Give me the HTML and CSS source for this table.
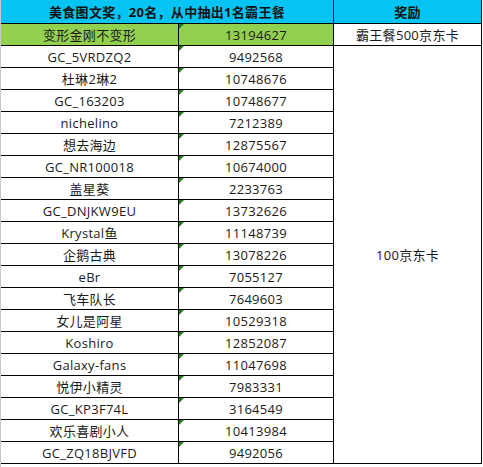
FILE: index.html
```html
<!DOCTYPE html>
<html lang="zh-CN">
<head>
<meta charset="utf-8">
<title>美食图文奖</title>
<link rel="stylesheet" href="styles.css">
</head>
<body>
<div class="sheet">
  <div class="grid">
    <div class="cell head span2">美食图文奖，20名，从中抽出1名霸王餐</div>
    <div class="cell head">奖励</div>

    <div class="cell win">变形金刚不变形</div>
    <div class="cell win num">13194627</div>
    <div class="cell">霸王餐500京东卡</div>

    <div class="cell">GC_5VRDZQ2</div>
    <div class="cell num">9492568</div>
    <div class="cell prize">100京东卡</div>

    <div class="cell">杜琳2琳2</div>
    <div class="cell num">10748676</div>
    <div class="cell">GC_163203</div>
    <div class="cell num">10748677</div>
    <div class="cell">nichelino</div>
    <div class="cell num">7212389</div>
    <div class="cell">想去海边</div>
    <div class="cell num">12875567</div>
    <div class="cell">GC_NR100018</div>
    <div class="cell num">10674000</div>
    <div class="cell">盖星葵</div>
    <div class="cell num">2233763</div>
    <div class="cell">GC_DNJKW9EU</div>
    <div class="cell num">13732626</div>
    <div class="cell">Krystal鱼</div>
    <div class="cell num">11148739</div>
    <div class="cell">企鹅古典</div>
    <div class="cell num">13078226</div>
    <div class="cell">eBr</div>
    <div class="cell num">7055127</div>
    <div class="cell">飞车队长</div>
    <div class="cell num">7649603</div>
    <div class="cell">女儿是阿星</div>
    <div class="cell num">10529318</div>
    <div class="cell">Koshiro</div>
    <div class="cell num">12852087</div>
    <div class="cell">Galaxy-fans</div>
    <div class="cell num">11047698</div>
    <div class="cell">悦伊小精灵</div>
    <div class="cell num">7983331</div>
    <div class="cell">GC_KP3F74L</div>
    <div class="cell num">3164549</div>
    <div class="cell">欢乐喜剧小人</div>
    <div class="cell num">10413984</div>
    <div class="cell">GC_ZQ18BJVFD</div>
    <div class="cell num">9492056</div>
  </div>
</div>
</body>
</html>
```

FILE: styles.css
```css
html, body {
  margin: 0;
  padding: 0;
  background: #ffffff;
}

body {
  font-family: "Open Sans", "Noto Sans CJK SC", sans-serif;
  font-size: 13px;
  color: #1a1a1a;
}

.sheet {
  border-left: 1px solid #c8c8c8;
  width: 482px;
  height: 467px;
  box-sizing: border-box;
}

.grid {
  display: grid;
  grid-template-columns: 177px 154px 147px;
  grid-template-rows: 23px repeat(20, 21px);
  gap: 1px;
  background: #000000;
  padding: 0 1px 1px 0;
  width: 480px;
}

.cell {
  background: #ffffff;
  display: flex;
  align-items: center;
  justify-content: center;
  white-space: nowrap;
  position: relative;
  letter-spacing: 0.3px;
}

.head {
  background: #05c4f4;
  font-weight: bold;
  color: #111111;
}

.span2 {
  grid-column: span 2;
}

.win {
  background: #92d050;
}

.num::before {
  content: "";
  position: absolute;
  top: 0;
  left: 0;
  border-top: 5px solid #1f7a1f;
  border-right: 5px solid transparent;
}

.prize {
  grid-row: span 19;
}
```
